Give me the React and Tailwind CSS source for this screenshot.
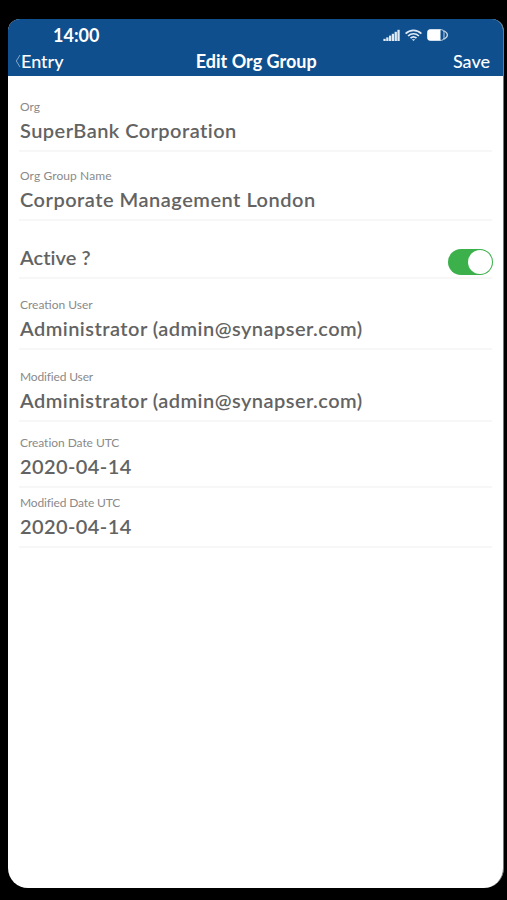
const FIELDS = [
  { label: 'Org', value: 'SuperBank Corporation', height: 'h-[76px]', spacing: 'tracking-[0.45px]' },
  { label: 'Org Group Name', value: 'Corporate Management London', height: 'h-[69px]', spacing: 'tracking-[0.5px]', labelSpacing: 'tracking-[0.1px]' },
  { value: 'Active ?', height: 'h-[58px]', spacing: 'tracking-[0.05px]', toggle: true },
  { label: 'Creation User', value: 'Administrator (admin@synapser.com)', height: 'h-[71px]', spacing: 'tracking-[0.46px]' },
  { label: 'Modified User', value: 'Administrator (admin@synapser.com)', height: 'h-[72px]', spacing: 'tracking-[0.46px]', labelSpacing: 'tracking-[-0.15px]' },
  { label: 'Creation Date UTC', value: '2020-04-14', height: 'h-[66px]', spacing: 'tracking-[0.4px]', labelSpacing: 'tracking-[-0.05px]' },
  { label: 'Modified Date UTC', value: '2020-04-14', height: 'h-[60px]', spacing: 'tracking-[0.4px]', labelSpacing: 'tracking-[-0.15px]' },
]

const SignalIcon = () => (
  <svg width="17" height="12" viewBox="0 0 17 12" fill="#dfeaf5">
    <rect x="0.4" y="9.8" width="2.3" height="2.2" />
    <rect x="3.2" y="8.4" width="2.3" height="3.6" />
    <rect x="6" y="6.6" width="2.3" height="5.4" />
    <rect x="8.8" y="4.8" width="2.3" height="7.2" />
    <rect x="11.6" y="2.8" width="2.3" height="9.2" />
    <rect x="14.4" y="0.8" width="2.3" height="11.2" />
  </svg>
)

const WifiIcon = () => (
  <svg width="17" height="12" viewBox="0 0 17 12" fill="none" stroke="#dfeaf5" strokeWidth="1.7">
    <path d="M0.6 4.7C5 0.2 12 0.2 16.4 4.7" />
    <path d="M3.1 7C6.2 4 10.8 4 13.9 7" />
    <path d="M5.5 9.2C7.3 7.5 9.7 7.5 11.5 9.2" />
    <path d="M6.8 10.3h3.4L8.5 11.9z" fill="#dfeaf5" stroke="none" />
  </svg>
)

const BatteryIcon = () => (
  <svg width="22" height="12" viewBox="0 0 22 12" fill="none">
    <rect x="0.6" y="0.7" width="16.4" height="10.6" rx="2.6" stroke="#c3d6e8" />
    <path d="M3 0.5H13.5V11.5H3A2.5 2.5 0 0 1 0.5 9V3A2.5 2.5 0 0 1 3 0.5z" fill="#fff" />
    <path d="M17 1.8C19 3 20.4 4.4 20.4 6S19 9 17 10.2" stroke="#c3d6e8" strokeWidth="1.3" />
  </svg>
)

const Toggle = () => (
  <span className="flex h-[26px] w-[45px] justify-end rounded-full bg-[#3bb04b] p-px">
    <span className="size-6 rounded-full bg-white" />
  </span>
)

const Header = () => (
  <header className="h-[57px] shrink-0 bg-[#0f4f8d] text-white">
    <div className="flex h-8 items-center pr-[54px] pl-[45px]">
      <span className="flex-1 text-[18px] leading-8 font-bold">14:00</span>
      <div className="flex items-center gap-[5px]">
        <SignalIcon />
        <WifiIcon />
        <BatteryIcon />
      </div>
    </div>
    <div className="flex h-5 items-center justify-between pr-[13px] pl-[7px] text-[18px] leading-5">
      <div className="flex items-center">
        <svg width="6" height="14" viewBox="0 0 6 14" fill="none" stroke="#83a8ca">
          <path d="M5 1L1.3 7L5 13" />
        </svg>
        <span className="font-medium">Entry</span>
      </div>
      <span className="pr-[4px] font-bold whitespace-nowrap">Edit Org Group</span>
      <span className="font-medium">Save</span>
    </div>
  </header>
)

const Field = ({ label, value, height, spacing, labelSpacing = '', toggle }) => (
  <div className={`flex items-end justify-between border-b-2 border-[#f7f7f7] ${height}`}>
    <div className="pb-[5px] pl-px">
      {label && <p className={`pb-px text-[12px] leading-4 text-[#8a8a8a] ${labelSpacing}`}>{label}</p>}
      <p className={`text-[20px] leading-[29px] font-semibold whitespace-nowrap text-[#636363] ${spacing}`}>{value}</p>
    </div>
    {toggle && (
      <div className="-mr-px pb-[2px]">
        <Toggle />
      </div>
    )}
  </div>
)

export default function App() {
  return (
    <div className="h-[900px] w-[507px] bg-black pt-[19px] pl-2 font-['Lato',sans-serif]">
      <main className="flex h-[869px] w-[496px] flex-col overflow-hidden rounded-t-[12px] rounded-b-[20px] border-r border-[#777] bg-white">
        <Header />
        <section className="px-[11px]">
          {FIELDS.map((field, index) => (
            <Field key={index} {...field} />
          ))}
        </section>
      </main>
    </div>
  )
}
